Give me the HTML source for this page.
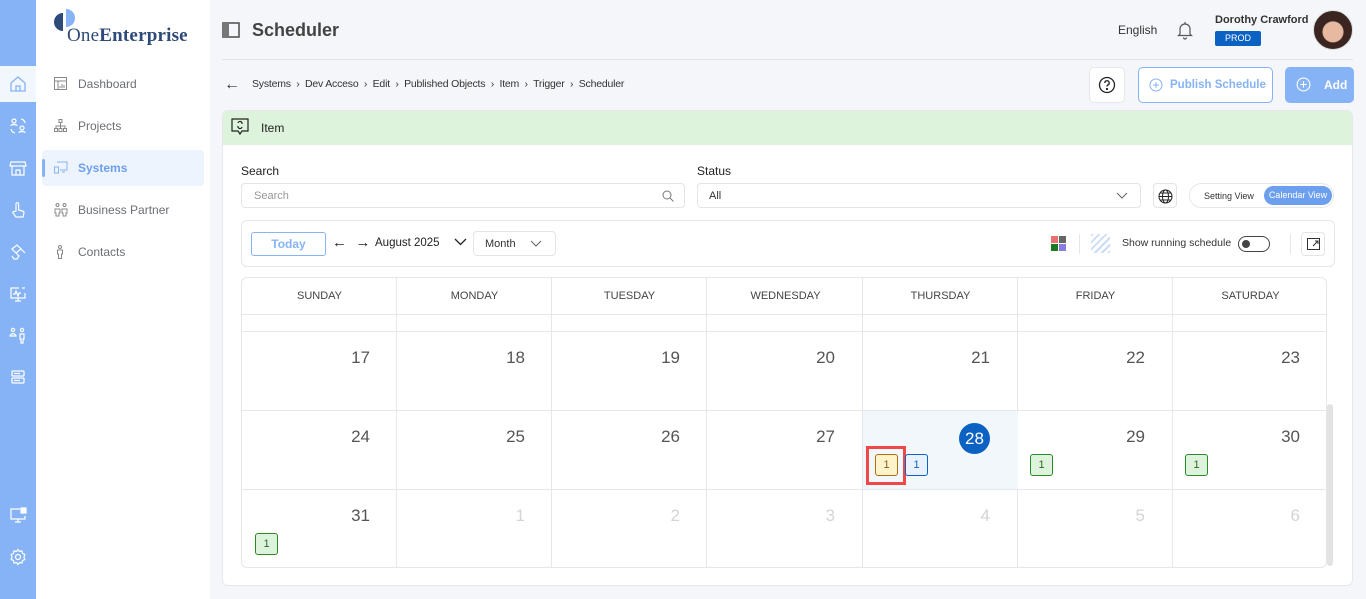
<!DOCTYPE html>
<html><head><meta charset="utf-8"><style>
*{box-sizing:border-box;margin:0;padding:0}
body{width:1366px;height:599px;overflow:hidden;background:#f4f6fa;font-family:"Liberation Sans",sans-serif;color:#333;position:relative;font-size:12px}
.a{position:absolute}
.rail{left:0;top:0;width:36px;height:599px;background:#86b3f5}
.ri{position:absolute;left:9px;width:18px;height:18px}
.side{left:36px;top:0;width:174px;height:599px;background:#fff}
.nav{position:absolute;left:42px;width:162px;height:36px;display:flex;align-items:center;padding-left:36px;font-size:12px;color:#6b6f75}
.nav svg{position:absolute;left:12px;top:11px}
.card{left:222px;top:110px;width:1131px;height:476px;background:#fff;border:1px solid #e5e7eb;border-radius:6px;overflow:hidden}
.inp{border:1px solid #e2e4e8;border-radius:4px;background:#fff}
.cal{left:241px;top:277px;width:1086px;height:291px;border:1px solid #e5e7eb;border-radius:6px;overflow:hidden;background:#fff}
.col{position:absolute;top:0;height:291px;border-right:1px solid #e5e7eb}
.hd{position:absolute;top:0;height:37px;width:155px;text-align:center;line-height:37px;font-size:11px;color:#444}
.hl{position:absolute;left:0;width:1086px;height:1px;background:#e5e7eb}
.n{position:absolute;font-size:17px;color:#555;text-align:right;width:30px}
.n.g{color:#d2d4d8}
.b{position:absolute;width:23px;height:22px;border:1px solid;border-radius:3px;font-size:11px;text-align:center;line-height:20px}
.gr{border-color:#2a8a2a;background:#def3dc;color:#2a6a2a}
</style></head><body>
<div class="a rail">
<div class="a" style="left:0;top:66px;width:36px;height:36px;background:#f2f6fd"></div>
<svg class="ri" style="top:75px" viewBox="0 0 18 18" fill="none" stroke="#86b3f5" stroke-width="1.3"><path d="M2 8L9 2l7 6v8H2z M7 16v-5h4v5"/></svg>
<svg class="ri" style="top:117px" viewBox="0 0 18 18" fill="none" stroke="#fff" stroke-width="1.2"><circle cx="5" cy="4" r="2"/><path d="M2 9c0-2 6-2 6 0"/><circle cx="13" cy="11" r="2"/><path d="M10 16c0-2 6-2 6 0M12 2a5 5 0 0 1 4 4M2 12a5 5 0 0 0 4 4"/></svg>
<svg class="ri" style="top:159px" viewBox="0 0 18 18" fill="none" stroke="#fff" stroke-width="1.2"><path d="M2 3h14l1 4H1zM3 7v9h12V7M7 16v-5h4v5"/></svg>
<svg class="ri" style="top:201px" viewBox="0 0 18 18" fill="none" stroke="#fff" stroke-width="1.2"><path d="M7 10V3a1.3 1.3 0 0 1 2.6 0v6l4 1c1 .3 1.5 1 1.3 2l-.8 4H7l-3-4c-.6-1 .5-2 1.4-1.3z"/></svg>
<svg class="ri" style="top:243px" viewBox="0 0 18 18" fill="none" stroke="#fff" stroke-width="1.2"><path d="M3 6l5-4 4 4-5 4zM7 10l3 3-2 3H5l-2-3M12 6l4 4"/></svg>
<svg class="ri" style="top:285px" viewBox="0 0 18 18" fill="none" stroke="#fff" stroke-width="1.2"><path d="M10 3H2v10h14V8M6 16h6M9 13v3M4 9h2l1-3 2 5 1-3h2M13 3h3"/></svg>
<svg class="ri" style="top:326px" viewBox="0 0 18 18" fill="none" stroke="#fff" stroke-width="1.2"><circle cx="4" cy="4" r="1.6"/><circle cx="13" cy="4" r="1.6"/><path d="M1 10c0-3 6-3 6 0h-6zM11 8h4v5h-1v4h-2v-4h-1z"/></svg>
<svg class="ri" style="top:368px" viewBox="0 0 18 18" fill="none" stroke="#fff" stroke-width="1.3"><rect x="3" y="3" width="12" height="5" rx="1"/><rect x="3" y="10" width="12" height="5" rx="1"/><path d="M5 5.5h6M5 12.5h6"/></svg>
<svg class="ri" style="top:506px" viewBox="0 0 18 18" fill="none" stroke="#fff" stroke-width="1.2"><path d="M11 3H2v10h14v-3M6 16h6M9 13v3"/><rect x="12" y="2" width="2" height="2" fill="#fff"/><rect x="15" y="2" width="2" height="2" fill="#fff"/><rect x="12" y="5" width="2" height="2" fill="#fff"/><rect x="15" y="5" width="2" height="2" fill="#fff"/></svg>
<svg class="ri" style="top:548px" viewBox="0 0 18 18" fill="none" stroke="#fff" stroke-width="1.2"><circle cx="9" cy="9" r="2.5"/><path d="M9 1.5l1.5 2 2.5-.5.5 2.5 2.3 1L15 9l.8 2.5-2.3 1-.5 2.5-2.5-.5L9 16.5l-1.5-2-2.5.5-.5-2.5-2.3-1L3 9l-.8-2.5 2.3-1 .5-2.5 2.5.5z"/></svg>
</div>
<div class="a side">
<svg class="a" style="left:17px;top:9px" width="24" height="26" viewBox="0 0 24 26"><path d="M10 4a9 9 0 0 0 0 18z" fill="#2e4a78"/><path d="M13 0a9 9 0 0 1 0 18z" fill="#86b3f5"/></svg>
<div class="a" style="left:31px;top:25px;font-family:'Liberation Serif',serif;font-size:19px;color:#2e4a78;letter-spacing:.2px">One<b>Enterprise</b></div>
</div>
<div class="nav" style="top:66px"><svg width="13" height="13" viewBox="0 0 13 13" fill="none" stroke="#888"><rect x=".5" y=".5" width="12" height="12"/><path d="M.5 4h12M4 4v9M6 11V9M8 11V7M10 11V8"/></svg>Dashboard</div>
<div class="nav" style="top:108px"><svg width="13" height="13" viewBox="0 0 13 13" fill="none" stroke="#888"><rect x="5" y=".5" width="3" height="3"/><rect x=".5" y="9.5" width="3" height="3"/><rect x="5" y="9.5" width="3" height="3"/><rect x="9.5" y="9.5" width="3" height="3"/><path d="M6.5 3.5v6M2 9.5V7h9v2.5"/></svg>Projects</div>
<div class="nav" style="top:150px;background:#eef4fd;border-radius:4px;color:#6c9fee;font-weight:bold"><div class="a" style="left:0;top:9px;width:3px;height:18px;background:#86b3f5;border-radius:2px"></div><svg width="14" height="13" viewBox="0 0 14 13" fill="none" stroke="#86b3f5"><path d="M3 1h10v8H6M.5 6h4v6h-4zM8 11h3"/></svg>Systems</div>
<div class="nav" style="top:192px"><svg width="14" height="14" viewBox="0 0 14 14" fill="none" stroke="#888"><circle cx="3.5" cy="2" r="1.5"/><circle cx="10.5" cy="2" r="1.5"/><path d="M1 6h5v4H5v3H2v-3H1zM8 6h5v4h-1v3H9v-3H8z"/></svg>Business Partner</div>
<div class="nav" style="top:234px"><svg width="12" height="14" viewBox="0 0 12 14" fill="none" stroke="#888"><circle cx="6" cy="2" r="1.5"/><path d="M3.5 5h5v4h-1v4.5h-3V9h-1z"/></svg>Contacts</div>

<svg class="a" style="left:222px;top:22px" width="18" height="16" viewBox="0 0 18 16"><rect x="1" y="1" width="16" height="14" fill="none" stroke="#555" stroke-width="1.6"/><rect x="1" y="1" width="6" height="14" fill="#777"/></svg>
<div class="a" style="left:252px;top:20px;font-size:18px;font-weight:bold;color:#444">Scheduler</div>
<div class="a" style="left:1118px;top:23px;font-size:12px;color:#333">English</div>
<svg class="a" style="left:1176px;top:20px" width="18" height="20" viewBox="0 0 18 20" fill="none" stroke="#555" stroke-width="1.2"><path d="M4 14V9a5 5 0 0 1 10 0v5l1.5 1.5h-13zM7.5 17.5a1.5 1.5 0 0 0 3 0M9 2v2"/></svg>
<div class="a" style="left:1215px;top:14px;font-size:11px;font-weight:bold;color:#333">Dorothy Crawford</div>
<div class="a" style="left:1215px;top:31px;width:46px;height:15px;background:#0b62c3;color:#fff;font-size:9px;text-align:center;line-height:15px;border-radius:2px">PROD</div>
<div class="a" style="left:1313px;top:10px;width:40px;height:40px;border-radius:50%;background:radial-gradient(circle at 50% 55%,#e7b9a0 0 10px,#3a2520 11px);border:1px solid #ddd"></div>
<div class="a" style="left:222px;top:59px;width:1131px;height:1px;background:#e1e3e8"></div>

<div class="a" style="left:224px;top:76px;font-size:16px;color:#333">←</div>
<div class="a" style="left:252px;top:78px;font-size:10.5px;color:#333;letter-spacing:-.2px">Systems &nbsp;›&nbsp; Dev Acceso &nbsp;›&nbsp; Edit &nbsp;›&nbsp; Published Objects &nbsp;›&nbsp; Item &nbsp;›&nbsp; Trigger &nbsp;›&nbsp; Scheduler</div>
<div class="a" style="left:1089px;top:67px;width:36px;height:36px;background:#fff;border:1px solid #e5e7eb;border-radius:5px"><svg style="margin:8px" width="18" height="18" viewBox="0 0 18 18" fill="none" stroke="#222" stroke-width="1.3"><circle cx="9" cy="9" r="7.5"/><path d="M6.8 7a2.2 2.2 0 1 1 3 2c-.6.3-.8.8-.8 1.5"/><circle cx="9" cy="13" r=".5" fill="#222"/></svg></div>
<div class="a" style="left:1138px;top:67px;width:135px;height:36px;background:#fff;border:1px solid #86b3f5;border-radius:5px;color:#86b3f5;font-weight:bold;font-size:11.5px;line-height:34px;padding-left:31px">Publish Schedule<svg class="a" style="left:10px;top:10px" width="14" height="14" viewBox="0 0 14 14" fill="none" stroke="#86b3f5"><circle cx="7" cy="7" r="6"/><path d="M7 4v6M4 7h6"/></svg></div>
<div class="a" style="left:1285px;top:67px;width:69px;height:36px;background:#86b3f5;border-radius:5px;color:#fff;font-weight:bold;font-size:12px;line-height:36px;padding-left:39px">Add<svg class="a" style="left:11px;top:10px" width="15" height="15" viewBox="0 0 14 14" fill="none" stroke="#fff"><circle cx="7" cy="7" r="6"/><path d="M7 4v6M4 7h6"/></svg></div>

<div class="a card">
<div class="a" style="left:0;top:0;width:1131px;height:34px;background:#def3dc"></div>
<svg class="a" style="left:8px;top:7px" width="18" height="18" viewBox="0 0 18 18" fill="none" stroke="#222" stroke-width="1.2"><path d="M1 1h16v12H11l-2 3-2-3H1z"/><path d="M7 5a2 2 0 0 1 4 1M11 9a2 2 0 0 1-4-1"/></svg>
<div class="a" style="left:38px;top:10px;font-size:12px;color:#222">Item</div>
<div class="a" style="left:18px;top:53px;font-size:12px;color:#222">Search</div>
<div class="a inp" style="left:18px;top:72px;width:444px;height:25px;font-size:11px;color:#999;padding:6px 12px">Search<svg class="a" style="left:420px;top:6px" width="12" height="12" viewBox="0 0 12 12" fill="none" stroke="#777"><circle cx="5" cy="5" r="4"/><path d="M8 8l3.5 3.5"/></svg></div>
<div class="a" style="left:474px;top:53px;font-size:12px;color:#222">Status</div>
<div class="a inp" style="left:474px;top:72px;width:444px;height:25px;font-size:11px;color:#333;padding:6px 11px">All<svg class="a" style="left:418px;top:8px" width="12" height="8" viewBox="0 0 12 8" fill="none" stroke="#666"><path d="M1 1l5 5 5-5"/></svg></div>
<div class="a inp" style="left:930px;top:72px;width:24px;height:25px"><svg style="margin:5px 4px" width="15" height="15" viewBox="0 0 15 15" fill="none" stroke="#222"><circle cx="7.5" cy="7.5" r="6.5"/><ellipse cx="7.5" cy="7.5" rx="3" ry="6.5"/><path d="M1 7.5h13M2 4h11M2 11h11"/></svg></div>
<div class="a" style="left:966px;top:72px;width:145px;height:25px;border:1px solid #e5e7eb;border-radius:13px;background:#fff"><span class="a" style="left:14px;top:7px;font-size:9px;color:#333">Setting View</span><div class="a" style="left:74px;top:2px;width:68px;height:19px;border-radius:10px;background:#6c9fee;color:#fff;font-size:9px;line-height:19px;text-align:center">Calendar View</div></div>
<div class="a" style="left:18px;top:109px;width:1094px;height:47px;border:1px solid #e5e7eb;border-radius:6px"></div>
<div class="a" style="left:28px;top:121px;width:75px;height:24px;border:1px solid #86b3f5;border-radius:3px;color:#86b3f5;font-weight:bold;font-size:12px;text-align:center;line-height:22px">Today</div>
<div class="a" style="left:109px;top:123px;font-size:15px;color:#222">← &nbsp;→</div>
<div class="a" style="left:152px;top:126px;font-size:11.5px;color:#222">August 2025</div>
<svg class="a" style="left:231px;top:127px" width="13" height="8" viewBox="0 0 13 8" fill="none" stroke="#222" stroke-width="1.3"><path d="M1 1l5.5 5.5L12 1"/></svg>
<div class="a inp" style="left:250px;top:120px;width:83px;height:25px;font-size:11px;color:#333;padding:6px 11px">Month<svg class="a" style="left:56px;top:8px" width="12" height="8" viewBox="0 0 12 8" fill="none" stroke="#666"><path d="M1 1l5 5 5-5"/></svg></div>
<div class="a" style="left:828px;top:125px;width:7px;height:7px;background:#e87272"></div><div class="a" style="left:836px;top:125px;width:7px;height:7px;background:#666"></div><div class="a" style="left:828px;top:133px;width:7px;height:7px;background:#1b7a22"></div><div class="a" style="left:836px;top:133px;width:7px;height:7px;background:#8a7be0"></div>
<div class="a" style="left:856px;top:123px;width:1px;height:20px;background:#e5e7eb"></div>
<div class="a" style="left:868px;top:123px;width:19px;height:19px;background:repeating-linear-gradient(135deg,#c9dcf7 0 2px,#fff 2px 5px)"></div>
<div class="a" style="left:899px;top:126px;font-size:10.5px;color:#333">Show running schedule</div>
<div class="a" style="left:1015px;top:125px;width:32px;height:16px;border:1.5px solid #444;border-radius:8px"><div class="a" style="left:3px;top:3px;width:8px;height:8px;border-radius:50%;background:#444"></div></div>
<div class="a" style="left:1067px;top:123px;width:1px;height:20px;background:#e5e7eb"></div>
<div class="a inp" style="left:1078px;top:121px;width:24px;height:24px"><svg style="margin:5px" width="13" height="12" viewBox="0 0 13 12" fill="none" stroke="#333"><rect x=".5" y=".5" width="12" height="11"/><path d="M6 8l5-5M8 3h3v3"/></svg></div>
</div>

<div class="a cal">
<div class="col" style="left:0;width:155px"></div><div class="col" style="left:155px;width:155px"></div><div class="col" style="left:310px;width:155px"></div><div class="col" style="left:465px;width:156px"></div><div class="col" style="left:621px;width:155px"></div><div class="col" style="left:776px;width:155px"></div>
<div class="a" style="left:621px;top:133px;width:155px;height:79px;background:#f2f7fb"></div>
<div class="hd" style="left:0">SUNDAY</div><div class="hd" style="left:155px">MONDAY</div><div class="hd" style="left:310px">TUESDAY</div><div class="hd" style="left:466px">WEDNESDAY</div><div class="hd" style="left:621px">THURSDAY</div><div class="hd" style="left:776px">FRIDAY</div><div class="hd" style="left:931px">SATURDAY</div>
<div class="hl" style="top:36px"></div><div class="hl" style="top:53px"></div><div class="hl" style="top:132px"></div><div class="hl" style="top:211px"></div>
<div class="n" style="left:98px;top:70px">17</div><div class="n" style="left:253px;top:70px">18</div><div class="n" style="left:408px;top:70px">19</div><div class="n" style="left:563px;top:70px">20</div><div class="n" style="left:718px;top:70px">21</div><div class="n" style="left:873px;top:70px">22</div><div class="n" style="left:1028px;top:70px">23</div>
<div class="n" style="left:98px;top:149px">24</div><div class="n" style="left:253px;top:149px">25</div><div class="n" style="left:408px;top:149px">26</div><div class="n" style="left:563px;top:149px">27</div>
<div class="a" style="left:717px;top:145px;width:31px;height:31px;border-radius:50%;background:#0b62c3;color:#fff;font-size:17px;text-align:center;line-height:31px">28</div>
<div class="n" style="left:873px;top:149px">29</div><div class="n" style="left:1028px;top:149px">30</div>
<div class="a" style="left:624px;top:168px;width:40px;height:39px;border:3px solid #f04848"></div>
<div class="b" style="left:633px;top:176px;border-color:#b07010;background:#fff3cc;color:#8a5a10">1</div>
<div class="b" style="left:663px;top:176px;border-color:#0b62c3;background:#e8f1fd;color:#0b62c3">1</div>
<div class="b gr" style="left:788px;top:176px">1</div><div class="b gr" style="left:943px;top:176px">1</div>
<div class="n" style="left:98px;top:228px">31</div><div class="n g" style="left:253px;top:228px">1</div><div class="n g" style="left:408px;top:228px">2</div><div class="n g" style="left:563px;top:228px">3</div><div class="n g" style="left:718px;top:228px">4</div><div class="n g" style="left:873px;top:228px">5</div><div class="n g" style="left:1028px;top:228px">6</div>
<div class="b gr" style="left:13px;top:255px">1</div>
</div>
<div class="a" style="left:1327px;top:404px;width:6px;height:162px;background:#e2e2e2;border-radius:3px"></div>
</body></html>
